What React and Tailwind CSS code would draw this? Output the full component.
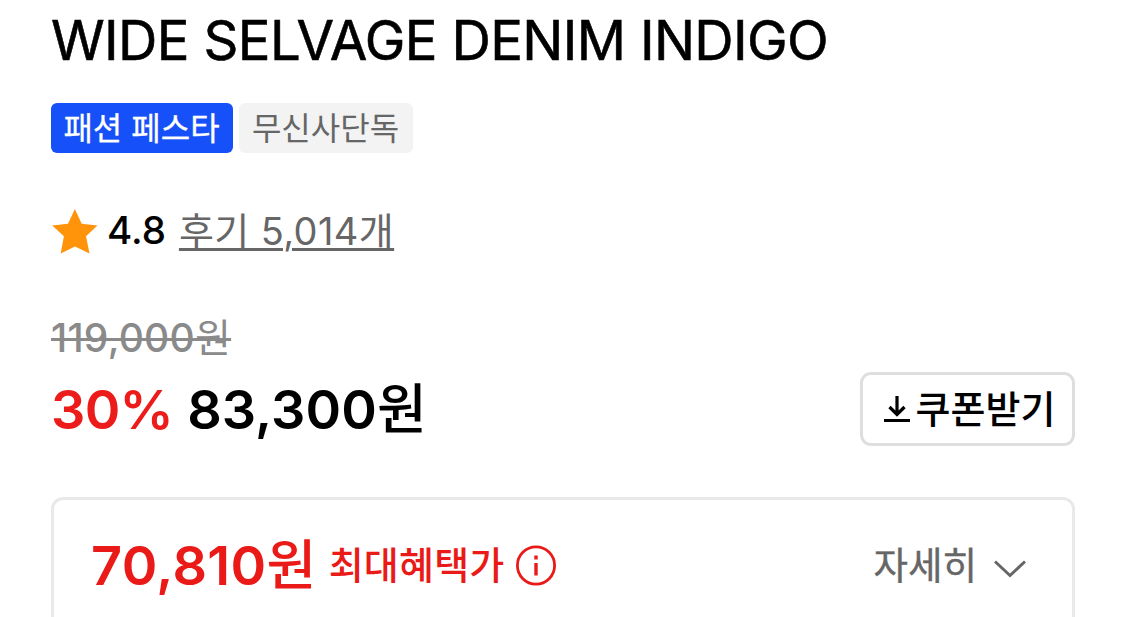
function App() {
  return (
    <div className="h-[617px] overflow-hidden bg-white px-[51px] pt-[10px] font-[Inter,'Noto_Sans_CJK_KR',sans-serif] text-black">
      <h1 className="h-[60px] text-[54.5px] leading-[60px] tracking-[-0.65px] whitespace-nowrap [-webkit-text-stroke:0.6px_black]">
        WIDE SELVAGE DENIM INDIGO
      </h1>

      <div className="mt-[33px] flex gap-[6px] text-[32px] leading-[51px] whitespace-nowrap">
        <span className="h-[50px] w-[182px] rounded-[6px] bg-[#1650f8] pr-px text-center text-white [-webkit-text-stroke:0.3px_white]">
          패션 페스타
        </span>
        <span className="h-[50px] w-[174px] rounded-[6px] bg-[#f3f3f3] pr-px text-center text-[#666]">
          무신사단독
        </span>
      </div>

      <div className="mt-[53px] flex h-[50px] items-center whitespace-nowrap">
        <svg className="ml-px" width="46" height="45" viewBox="0 0 46 45" fill="#ff930a">
          <path d="M22.900 0l6.800 14.800 15.800 1.600-11.500 10.900 3.500 17.200-14.500-7-14.300 7 3.200-17.200L.2 16.400 16 14.800z" />
        </svg>
        <span className="ml-[9px] text-[38.5px] font-medium">4.8</span>
        <span className="ml-[13px] text-[38px] tracking-[0.4px] text-[#666] underline decoration-[3px] underline-offset-[3px]">
          후기 5,014개
        </span>
      </div>

      <div className="mt-[57px] h-[50px] text-[39px] leading-[50px] font-medium tracking-[0.25px] text-[#8a8a8a]">
        <span className="line-through decoration-[3px]">
          119,000<span className="font-normal">원</span>
        </span>
      </div>

      <div className="mt-[9px] flex h-[74px] w-[1024px] items-center justify-between whitespace-nowrap">
        <div className="flex gap-[14px] text-[54px] font-semibold">
          <span className="tracking-[-0.7px] text-[#eb1c19]">30%</span>
          <span className="tracking-[0.1px]">
            83,300<span className="font-medium">원</span>
          </span>
        </div>
        <button className="flex h-[74px] w-[215px] items-center justify-center gap-[5px] rounded-[11px] border-[3px] border-[#dedede] pl-[3px] text-[38px] font-medium">
          <svg width="28" height="28" viewBox="0 0 28 28" fill="none" stroke="currentColor" strokeWidth="3.200">
            <path d="M14 1v18M6.500 12l7.500 7.500 7.500-7.500M1 25.500h26" />
          </svg>
          쿠폰받기
        </button>
      </div>

      <div className="mt-[51px] flex h-[140px] w-[1024px] items-start justify-between rounded-t-[12px] border-[3px] border-[#e9e9e9] pt-[27px] pr-[46px] pl-[37px] whitespace-nowrap">
        <div className="flex h-[76px] items-center text-[#e91a17]">
          <span className="text-[54px] font-semibold tracking-[0.4px]">
            70,810<span className="font-medium">원</span>
          </span>
          <span className="ml-[12px] text-[38px] font-medium tracking-[0.2px]">최대혜택가</span>
          <svg className="mt-[2px] ml-[10px]" width="42" height="42" viewBox="0 0 42 42" fill="none" stroke="currentColor" strokeWidth="2.800">
            <circle cx="21" cy="20.500" r="18.600" />
            <path strokeWidth="3.400" d="M21 18v12.500M21 10.500v4" />
          </svg>
        </div>
        <div className="flex h-[76px] items-center gap-[17px] pt-[2px] text-[37.5px] text-[#666]">
          <span className="[-webkit-text-stroke:0.4px_#666]">자세히</span>
          <svg className="mt-[5px]" width="32" height="18" viewBox="0 0 32 18" fill="none" stroke="currentColor" strokeWidth="3">
            <path d="M1 1.500l15 14 15-14" />
          </svg>
        </div>
      </div>
    </div>
  )
}

export default App
